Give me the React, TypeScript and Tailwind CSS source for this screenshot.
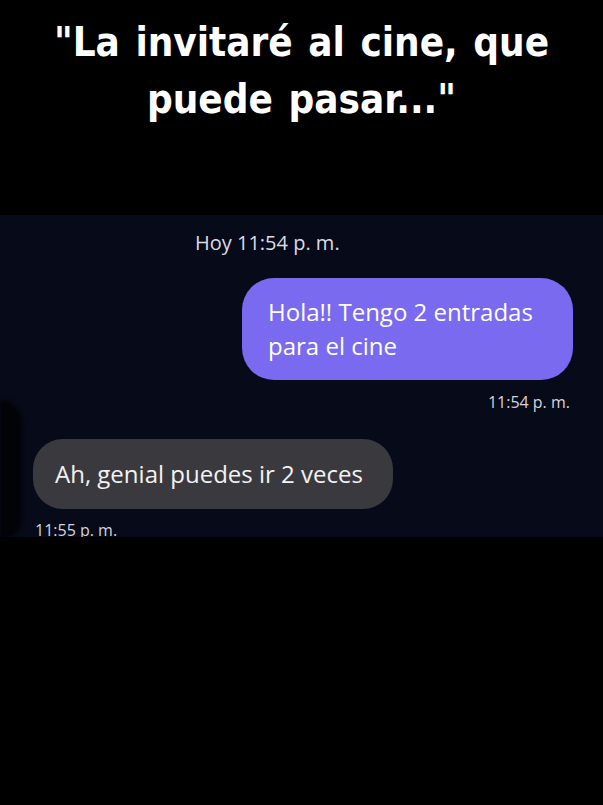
export default function App() {
  return (
    <div className="h-[805px] w-[603px] overflow-hidden bg-black">
      <Caption />
      <ChatView />
    </div>
  );
}

function Caption() {
  return (
    <div className="flex h-[215px] flex-col items-center pt-[14px] font-['DejaVu_Sans_Condensed','Liberation_Sans_Narrow',sans-serif] text-[40px] font-bold leading-[57px] text-white [word-spacing:3px]">
      <p>"La invitaré al cine, que</p>
      <p>puede pasar..."</p>
    </div>
  );
}

function ChatView() {
  return (
    <div className="relative h-[322px] overflow-hidden bg-[#070a18] font-['Open_Sans',sans-serif] text-[#e6e6ee]">
      <div className="absolute left-0 top-[185px] h-[140px] w-[22px] rounded-r-full bg-black/70 blur-[2px]" />
      <p className="ml-[195px] mt-[14px] text-[20px] leading-[28px] text-[#dcdce4]">Hoy 11:54 p. m.</p>
      <div className="mt-[21px] flex justify-end pr-[30px]">
        <div className="w-[331px] rounded-[32px] bg-[#7a6af0] px-[26px] py-[17px] text-[24px] leading-[34px] text-white">
          Hola!! Tengo 2 entradas para el cine
        </div>
      </div>
      <p className="mt-[11px] pr-[33px] text-right text-[16px] leading-[22px] text-[#d4d4dc]">11:54 p. m.</p>
      <div className="mt-[26px] flex pl-[33px]">
        <div className="rounded-[30px] bg-[#3a3a3e] py-[17px] pl-[22px] pr-[30px] text-[24px] leading-[36px] text-[#f2f2f2]">
          Ah, genial puedes ir 2 veces
        </div>
      </div>
      <p className="ml-[35px] mt-[10px] text-[16px] leading-[22px] text-[#d4d4dc]">11:55 p. m.</p>
    </div>
  );
}
